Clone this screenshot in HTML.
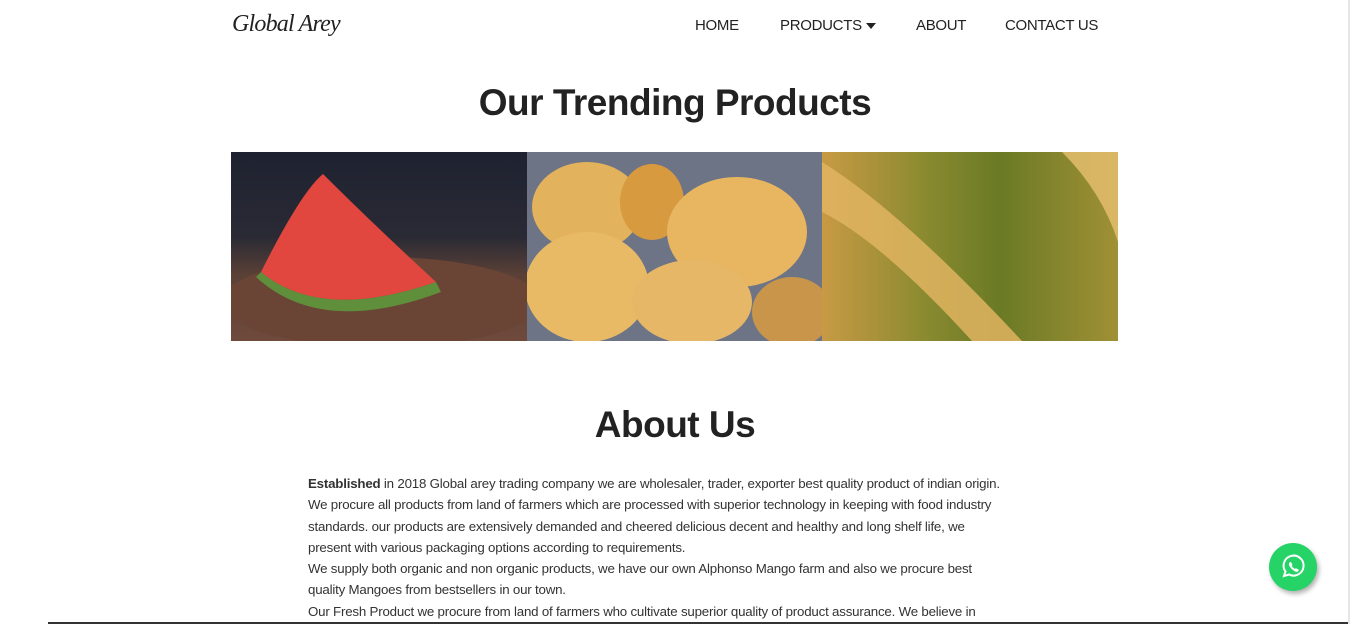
<!DOCTYPE html>
<html><head><meta charset="utf-8"><style>
body{margin:0;width:1350px;height:624px;overflow:hidden;background:#fff;font-family:"Liberation Sans",sans-serif;color:#222;position:relative}
.logo{position:absolute;left:232px;top:11px;font-family:"Liberation Serif",serif;font-style:italic;font-size:24px;color:#222;letter-spacing:-0.8px}
.nav{position:absolute;top:17px;font-size:15px;color:#222;letter-spacing:-0.3px}
h1{position:absolute;left:0;width:1350px;text-align:center;margin:0;font-size:37px;font-weight:bold;letter-spacing:-0.5px}
.img{position:absolute;top:152px;height:189px;overflow:hidden}
p{position:absolute;left:308px;top:473px;width:702px;margin:0;font-size:13.3px;line-height:21.3px;color:#333;letter-spacing:-0.2px}
</style></head><body>
<div class="logo">Global Arey</div>
<div class="nav" style="left:695px">HOME</div>
<div class="nav" style="left:780px">PRODUCTS <span style="display:inline-block;border:5px solid transparent;border-top:6px solid #222;border-bottom:0;vertical-align:middle"></span></div>
<div class="nav" style="left:916px">ABOUT</div>
<div class="nav" style="left:1005px">CONTACT US</div>
<h1 style="top:82px">Our Trending Products</h1>
<div class="img" style="left:231px;width:296px;background:linear-gradient(#1e2230 0%,#2a2a35 45%,#5a4036 65%,#6e4a3c 100%)">
<svg width="296" height="189"><ellipse cx="150" cy="150" rx="160" ry="45" fill="#6a4536"/><path d="M92 22 Q70 40 30 120 Q90 170 205 130 Q140 70 92 22Z" fill="#e2473f"/><path d="M30 120 Q90 170 205 130 L210 140 Q90 185 25 125Z" fill="#5f8f3a"/></svg></div>
<div class="img" style="left:527px;width:295px;background:#6c7486">
<svg width="295" height="189"><ellipse cx="60" cy="55" rx="55" ry="45" fill="#e3b25c"/><ellipse cx="125" cy="50" rx="32" ry="38" fill="#d79a3e"/><ellipse cx="210" cy="80" rx="70" ry="55" fill="#e8b561"/><ellipse cx="60" cy="135" rx="62" ry="55" fill="#e9ba66"/><ellipse cx="165" cy="150" rx="60" ry="42" fill="#e6b767"/><ellipse cx="265" cy="160" rx="40" ry="35" fill="#c8954a"/></svg></div>
<div class="img" style="left:822px;width:296px;background:linear-gradient(90deg,#c89a45 0%,#8a8a30 35%,#6a7a25 60%,#a09035 100%)">
<svg width="296" height="189"><path d="M0 10 Q80 60 200 189 L150 189 Q60 90 0 60Z" fill="#e0b460" opacity=".85"/><path d="M240 0 Q280 40 296 90 L296 0Z" fill="#e8c070" opacity=".8"/></svg></div>
<h1 style="top:404px">About Us</h1>
<p><b>Established</b> in 2018 Global arey trading company we are wholesaler, trader, exporter best quality product of indian origin.<br>We procure all products from land of farmers which are processed with superior technology in keeping with food industry standards. our products are extensively demanded and cheered delicious decent and healthy and long shelf life, we present with various packaging options according to requirements.<br>We supply both organic and non organic products, we have our own Alphonso Mango farm and also we procure best quality Mangoes from bestsellers in our town.<br>Our Fresh Product we procure from land of farmers who cultivate superior quality of product assurance. We believe in</p>
<div style="position:absolute;left:1269px;top:543px;width:48px;height:48px;border-radius:50%;background:#25d366;box-shadow:2px 3px 5px rgba(0,0,0,.3)">
<svg width="48" height="48" viewBox="0 0 48 48"><path d="M15 33 L16.5 28.5 A10 10 0 1 1 20 31.5 Z" fill="none" stroke="#fff" stroke-width="2"/><path d="M20.5 19.5 q1-1 1.8 0 l1 2 q.3.8-.5 1.4 q1 2 3 3 q.6-.8 1.4-.5 l2 1 q1 .8 0 1.8 q-1.5 1.5-4-.2 q-3-2-4.5-4.5 q-1.5-2.5-.2-4z" fill="#fff"/></svg></div>
<div style="position:absolute;left:48px;top:622px;width:1302px;height:2px;background:#333"></div>
<div style="position:absolute;left:1348px;top:0;width:2px;height:624px;background:#e6e6e6"></div>
</body></html>
